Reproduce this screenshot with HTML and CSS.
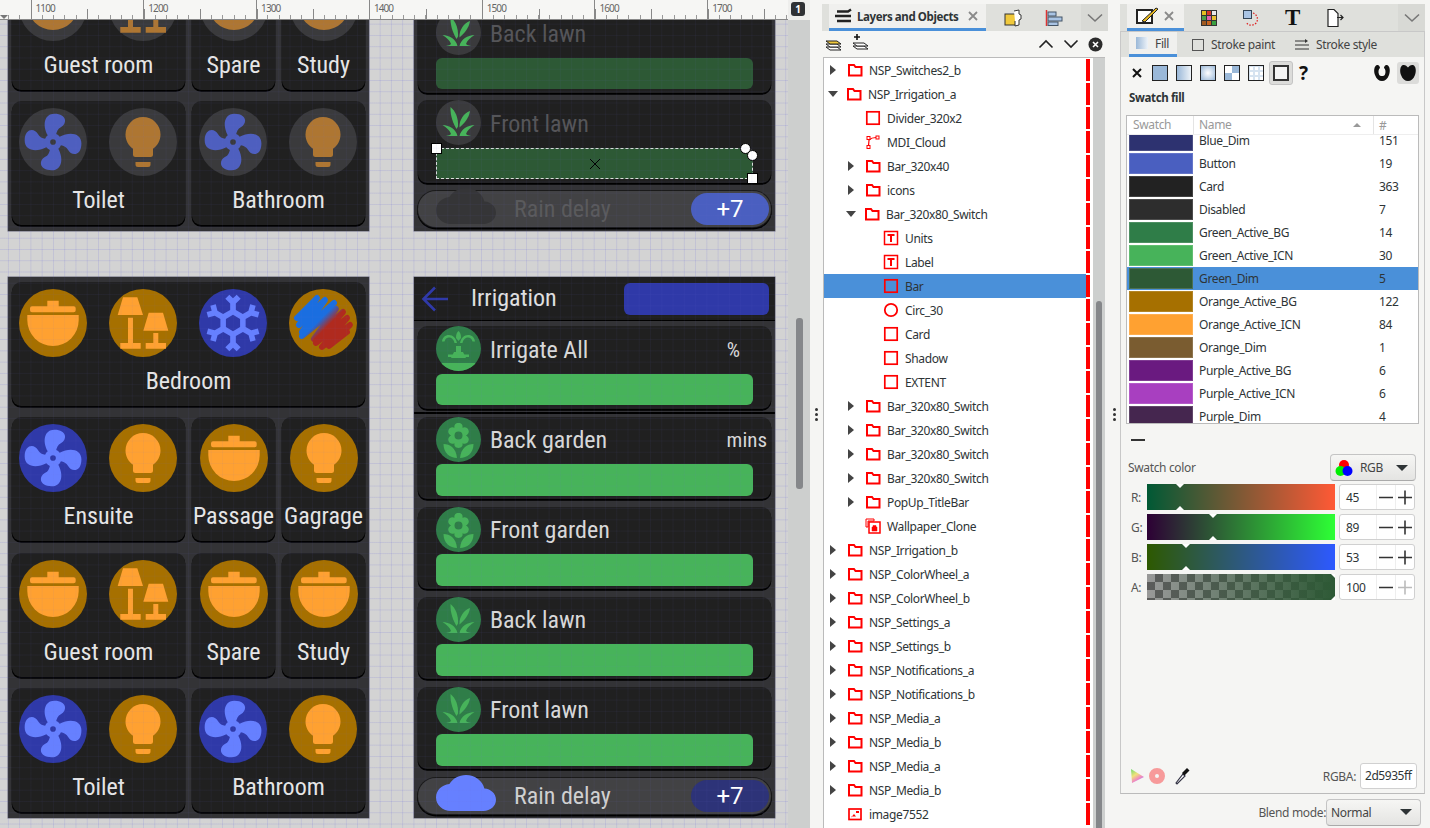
FILE: index.html
```html
<!DOCTYPE html>
<html>
<head>
<title>Inkscape - NSPanel</title>
<link rel="stylesheet" href="styles.css">
</head>
<body>

<svg class="defs" width="0" height="0">
  <defs>
    <linearGradient id="scribble-grad" gradientUnits="userSpaceOnUse" x1="18" y1="18" x2="50" y2="50">
      <stop offset="0.4" stop-color="#1a6ee0"/>
      <stop offset="0.62" stop-color="#b02a1e"/>
    </linearGradient>
    <symbol id="i-fan" viewBox="0 0 24 24"><path d="M12,11A1,1 0 0,0 11,12A1,1 0 0,0 12,13A1,1 0 0,0 13,12A1,1 0 0,0 12,11M12.5,2C17,2 17.11,5.57 14.75,6.75C13.76,7.24 13.32,8.29 13.13,9.22C13.61,9.42 14.03,9.73 14.35,10.13C18.05,8.13 22.03,8.92 22.03,12.5C22.03,17 18.46,17.1 17.28,14.73C16.78,13.74 15.72,13.3 14.79,13.11C14.59,13.59 14.28,14 13.88,14.34C15.87,18.03 15.08,22 11.5,22C7,22 6.91,18.42 9.27,17.24C10.25,16.75 10.69,15.71 10.89,14.79C10.4,14.59 9.97,14.27 9.65,13.87C5.96,15.85 2,15.07 2,11.5C2,7 5.56,6.89 6.74,9.26C7.24,10.25 8.29,10.68 9.22,10.87C9.41,10.39 9.73,9.97 10.14,9.65C8.15,5.96 8.94,2 12.5,2Z"/></symbol>
    <symbol id="i-bulb" viewBox="-1.6 -1.6 27.2 27.2"><path d="M12,2A7,7 0 0,0 5,9C5,11.38 6.19,13.47 8,14.74V17A1,1 0 0,0 9,18H15A1,1 0 0,0 16,17V14.74C17.81,13.47 19,11.38 19,9A7,7 0 0,0 12,2M9,21A1,1 0 0,0 10,22H14A1,1 0 0,0 15,21V20H9V21Z"/></symbol>
    <symbol id="i-snow" viewBox="0 0 24 24"><path d="M20.79,13.95L18.46,14.57L16.46,13.44V10.56L18.46,9.43L20.79,10.05L21.31,8.12L19.54,7.65L20,5.88L18.07,5.36L17.45,7.69L15.45,8.82L13,7.38V5.12L14.71,3.41L13.29,2L12,3.29L10.71,2L9.29,3.41L11,5.12V7.38L8.5,8.82L6.5,7.69L5.92,5.36L4,5.88L4.47,7.65L2.7,8.12L3.22,10.05L5.55,9.43L7.55,10.56V13.45L5.55,14.58L3.22,13.96L2.7,15.89L4.47,16.36L4,18.12L5.93,18.64L6.55,16.31L8.55,15.18L11,16.62V18.88L9.29,20.59L10.71,22L12,20.71L13.29,22L14.7,20.59L13,18.88V16.62L15.5,15.17L17.5,16.3L18.12,18.63L20,18.12L19.53,16.35L21.3,15.88L20.79,13.95M9.5,10.56L12,9.11L14.5,10.56V13.44L12,14.89L9.5,13.44V10.56Z"/></symbol>
    <symbol id="i-ceiling" viewBox="0 0 68 68"><path d="M28.3 11.7H39.7V17.3H54.7Q56.7 17.3 56.7 19.3V21.3Q56.7 23.3 54.7 23.3H13Q11 23.3 11 21.3V19.3Q11 17.3 13 17.3H28.3Z"/><path d="M8.3 26H59.7V31A25.7 26 0 0 1 8.3 31Z"/></symbol>
    <symbol id="i-lamps" viewBox="0 0 68 68"><path d="M14 8.3H28.3L34 26H8.7Z"/><path d="M19 28.7H24V54H31.7V59.7H11.3V54H19Z"/><path d="M39.7 23.7H54L59.3 41.7H34.3Z"/><path d="M44.3 44H49.3V54H57V59.7H36.7V54H44.3Z"/></symbol>
    <symbol id="i-scribble" viewBox="0 0 68 68"><path fill="none" stroke="url(#scribble-grad)" stroke-width="6" stroke-linejoin="round" stroke-linecap="round" d="M8 29L28 9L10 36L36 11L13 43L45 14L13 47L47 20L25 50L54 23L27 54L58 29L33 58L61 36L40 57L58 43"/></symbol>
    <symbol id="i-fountain" viewBox="0 0 45 45"><path d="M15 32H30L27 26H25V20H20V26H18Z"/><path d="M12 28.5H33V31H12Z"/><path d="M0 37H45V45H0Z"/><path d="M21 17C20 12 17 9 13 9C9 9 6.500 11.500 6 15.500H8.500C9 13 11 11.500 13 11.500C16 11.500 18 14 18.500 17Z"/><path d="M24 17C25 12 28 9 32 9C36 9 38.500 11.500 39 15.500H36.500C36 13 34 11.500 32 11.500C29 11.500 27 14 26.500 17Z"/><path d="M20 12C20 8 21 6 22.500 5C24 6 25 8 25 12L22.500 15Z"/></symbol>
    <symbol id="i-flower" viewBox="0 0 45 45"><path fill-rule="evenodd" d="M22.500 6C25.500 6 27 8 26.500 10.700C29 9.500 31.500 10.500 32.500 13C33.500 15.500 32 17.500 30 18.500C32 19.500 33.500 21.500 32.500 24C31.500 26.500 29 27.500 26.500 26.300C27 29 25.500 31 22.500 31C19.500 31 18 29 18.500 26.300C16 27.500 13.500 26.500 12.500 24C11.500 21.500 13 19.500 15 18.500C13 17.500 11.500 15.500 12.500 13C13.500 10.500 16 9.500 18.500 10.700C18 8 19.500 6 22.500 6ZM22.500 14.500A4 4 0 1 0 22.500 22.500A4 4 0 1 0 22.500 14.500Z"/><path d="M7.500 27C14 27 20 31 21 41C14 41 7.500 36 7.500 27Z"/><path d="M37.500 27C31 27 25 31 24 41C31 41 37.500 36 37.500 27Z"/></symbol>
    <symbol id="i-grass" viewBox="0 0 45 45"><path d="M6.500 25C13.500 25.500 20 29 21.500 36H7.500C11 36 13.500 35.500 15 34C14 30.500 10.500 27.500 6.500 25Z"/><path d="M38.500 25C31.500 25.500 25 29 23.500 36H37.500C34 36 31.500 35.500 30 34C31 30.500 34.500 27.500 38.500 25Z"/><path d="M14.500 7C19.500 11 22.500 18 22 26.500L20.500 29C17.500 24 14 16 14.500 7Z"/><path d="M34 11C33 18 28.500 23 23.500 27.500C23 20 27.500 13.500 34 11Z"/></symbol>
    <symbol id="i-folder" viewBox="0 0 16 16"><path fill="none" stroke="#f00" stroke-width="2" d="M2 3H7L8.500 5H14.500V13.500H2Z"/></symbol>
    <symbol id="i-rect" viewBox="0 0 16 16"><rect x="1.800" y="1.800" width="12.400" height="12.400" fill="none" stroke="#f00" stroke-width="1.700"/></symbol>
    <symbol id="i-path" viewBox="0 0 16 16"><path fill="none" stroke="#f00" stroke-width="1.200" d="M3.500 12L4 6C6 4 8 3.500 11 3.500"/><rect x="2" y="2.500" width="3" height="3" fill="#fff" stroke="#f00"/><rect x="2" y="11.500" width="3" height="3" fill="#fff" stroke="#f00"/><rect x="11" y="2" width="3" height="3" fill="#fff" stroke="#f00"/></symbol>
    <symbol id="i-text" viewBox="0 0 16 16"><rect x="1.500" y="1.500" width="13" height="13" fill="none" stroke="#f00" stroke-width="1.500"/><path d="M4.500 4H11.500V6H9V12H7V6H4.500Z" fill="#f00"/></symbol>
    <symbol id="i-circ" viewBox="0 0 16 16"><circle cx="8" cy="8" r="6.200" fill="none" stroke="#f00" stroke-width="1.800"/></symbol>
    <symbol id="i-clone" viewBox="0 0 16 16"><path fill="none" stroke="#f00" d="M1 1H9V3H3V9H1Z"/><rect x="4" y="4" width="11" height="11" fill="none" stroke="#f00" stroke-width="1.500"/><path d="M7 9H12V13H7ZM8 9V7.500H11V9" fill="#f00" stroke="#f00" stroke-width=".5"/></symbol>
    <symbol id="i-image" viewBox="0 0 16 16"><rect x="2" y="3" width="12" height="10.500" fill="none" stroke="#f00" stroke-width="1.700"/><path d="M4 11.500L7 8L9 10.500H4ZM9 7H12V5H9Z" fill="#f00"/></symbol>
    <symbol id="i-minus-plus" viewBox="0 0 56 26"><path d="M17.500 0V26M36.500 0V26" stroke="#eee" fill="none"/><path d="M20 13.500H34M39 13.500H53M46 6.500V20.500" fill="none" stroke="#333" stroke-width="1.600"/></symbol>
    <symbol id="i-close" viewBox="0 0 10 10"><path d="M1 1L9 9M9 1L1 9" fill="none" stroke="#8a8a8a" stroke-width="1.800"/></symbol>
  </defs>
</svg>

<div class="app">

  <!-- canvas side -->
  <div class="canvas-side">
    <div class="ruler-row">
      <div class="ruler">
        <span class="rule-num">1100</span>
        <span class="rule-num">1200</span>
        <span class="rule-num">1300</span>
        <span class="rule-num">1400</span>
        <span class="rule-num">1500</span>
        <span class="rule-num">1600</span>
        <span class="rule-num">1700</span>
      </div>
      <div class="page-badge"><b>1</b></div>
    </div>
    <div class="canvas-row">
      <div class="paper">

        <div class="panel panel-rooms dim panel-a">
          <div class="card col-2"><div class="icons"><span class="circ"><svg class="ico"><use href="#i-ceiling"/></svg></span><span class="circ"><svg class="ico"><use href="#i-lamps"/></svg></span></div><div class="room-label">Guest room</div></div>
          <div class="card"><div class="icons"><span class="circ"><svg class="ico"><use href="#i-ceiling"/></svg></span></div><div class="room-label">Spare</div></div>
          <div class="card"><div class="icons"><span class="circ"><svg class="ico"><use href="#i-ceiling"/></svg></span></div><div class="room-label">Study</div></div>
          <div class="card col-2"><div class="icons"><span class="circ blue"><svg class="ico"><use href="#i-fan"/></svg></span><span class="circ"><svg class="ico"><use href="#i-bulb"/></svg></span></div><div class="room-label">Toilet</div></div>
          <div class="card col-2"><div class="icons"><span class="circ blue"><svg class="ico"><use href="#i-fan"/></svg></span><span class="circ"><svg class="ico"><use href="#i-bulb"/></svg></span></div><div class="room-label">Bathroom</div></div>
        </div>

        <div class="panel panel-irr dim panel-b">
          <div class="irr-card">
            <div class="irr-head"><span class="irr-circ"><svg class="ico"><use href="#i-grass"/></svg></span><span class="irr-label">Back lawn</span></div>
            <div class="irr-bar"></div>
          </div>
          <div class="irr-card">
            <div class="irr-head"><span class="irr-circ"><svg class="ico"><use href="#i-grass"/></svg></span><span class="irr-label">Front lawn</span></div>
            <div class="irr-bar selected">
              <span class="handle sq tl"></span>
              <span class="handle rd tr1"></span>
              <span class="handle rd tr2"></span>
              <span class="handle sq br"></span>
              <svg class="center-x" width="12" height="12"><path d="M1 1L11 11M11 1L1 11" stroke="#000" fill="none"/></svg>
            </div>
          </div>
          <div class="rain">
            <svg class="cloud" viewBox="0 4 24 16" preserveAspectRatio="none"><path d="M19.35 10.04C18.67 6.59 15.64 4 12 4 9.11 4 6.6 5.64 5.35 8.04 2.34 8.36 0 10.91 0 14c0 3.31 2.69 6 6 6h13c2.76 0 5-2.24 5-5 0-2.64-2.05-4.78-4.65-4.96z"/></svg>
            <span class="rain-label">Rain delay</span>
            <span class="rain-btn">+7</span>
          </div>
        </div>

        <div class="panel panel-rooms panel-c">
          <div class="card col-3"><div class="icons"><span class="circ"><svg class="ico"><use href="#i-ceiling"/></svg></span><span class="circ"><svg class="ico"><use href="#i-lamps"/></svg></span><span class="circ blue"><svg class="ico"><use href="#i-snow"/></svg></span><span class="circ"><svg class="ico scribble"><use href="#i-scribble"/></svg></span></div><div class="room-label">Bedroom</div></div>
          <div class="card col-2"><div class="icons"><span class="circ blue"><svg class="ico"><use href="#i-fan"/></svg></span><span class="circ"><svg class="ico"><use href="#i-bulb"/></svg></span></div><div class="room-label">Ensuite</div></div>
          <div class="card"><div class="icons"><span class="circ"><svg class="ico"><use href="#i-ceiling"/></svg></span></div><div class="room-label">Passage</div></div>
          <div class="card"><div class="icons"><span class="circ"><svg class="ico"><use href="#i-bulb"/></svg></span></div><div class="room-label">Gagrage</div></div>
          <div class="card col-2"><div class="icons"><span class="circ"><svg class="ico"><use href="#i-ceiling"/></svg></span><span class="circ"><svg class="ico"><use href="#i-lamps"/></svg></span></div><div class="room-label">Guest room</div></div>
          <div class="card"><div class="icons"><span class="circ"><svg class="ico"><use href="#i-ceiling"/></svg></span></div><div class="room-label">Spare</div></div>
          <div class="card"><div class="icons"><span class="circ"><svg class="ico"><use href="#i-ceiling"/></svg></span></div><div class="room-label">Study</div></div>
          <div class="card col-2"><div class="icons"><span class="circ blue"><svg class="ico"><use href="#i-fan"/></svg></span><span class="circ"><svg class="ico"><use href="#i-bulb"/></svg></span></div><div class="room-label">Toilet</div></div>
          <div class="card col-2"><div class="icons"><span class="circ blue"><svg class="ico"><use href="#i-fan"/></svg></span><span class="circ"><svg class="ico"><use href="#i-bulb"/></svg></span></div><div class="room-label">Bathroom</div></div>
        </div>

        <div class="panel panel-irr panel-d">
          <div class="title-bar">
            <svg class="back" width="28" height="26" viewBox="0 0 28 26"><path d="M27 13H3M14 1.500L2.500 13L14 24.500" fill="none" stroke="#2f39a8" stroke-width="2.600"/></svg>
            <span class="title-text">Irrigation</span>
            <span class="title-btn"></span>
          </div>
          <div class="irr-card first">
            <div class="irr-head"><span class="irr-circ"><svg class="ico"><use href="#i-fountain"/></svg></span><span class="irr-label">Irrigate All</span><span class="irr-unit pct">%</span></div>
            <div class="irr-bar"></div>
          </div>
          <div class="divider"></div>
          <div class="irr-card">
            <div class="irr-head"><span class="irr-circ"><svg class="ico"><use href="#i-flower"/></svg></span><span class="irr-label">Back garden</span><span class="irr-unit">mins</span></div>
            <div class="irr-bar"></div>
          </div>
          <div class="irr-card">
            <div class="irr-head"><span class="irr-circ"><svg class="ico"><use href="#i-flower"/></svg></span><span class="irr-label">Front garden</span></div>
            <div class="irr-bar"></div>
          </div>
          <div class="irr-card">
            <div class="irr-head"><span class="irr-circ"><svg class="ico"><use href="#i-grass"/></svg></span><span class="irr-label">Back lawn</span></div>
            <div class="irr-bar"></div>
          </div>
          <div class="irr-card">
            <div class="irr-head"><span class="irr-circ"><svg class="ico"><use href="#i-grass"/></svg></span><span class="irr-label">Front lawn</span></div>
            <div class="irr-bar"></div>
          </div>
          <div class="rain">
            <svg class="cloud" viewBox="0 4 24 16" preserveAspectRatio="none"><path d="M19.35 10.04C18.67 6.59 15.64 4 12 4 9.11 4 6.6 5.64 5.35 8.04 2.34 8.36 0 10.91 0 14c0 3.31 2.69 6 6 6h13c2.76 0 5-2.24 5-5 0-2.64-2.05-4.78-4.65-4.96z"/></svg>
            <span class="rain-label">Rain delay</span>
            <span class="rain-btn">+7</span>
          </div>
        </div>

      </div>
      <div class="canvas-scroll"><div class="canvas-thumb"></div></div>
    </div>
  </div>

  <div class="grip"><i></i><i></i><i></i></div>

  <!-- layers dock -->
  <div class="dock dock-layers">
    <div class="tabbar">
      <div class="tab active tab-layers">
        <svg class="tab-glyph" width="20" height="16" viewBox="0 0 20 16"><path d="M3 3.500H14L17 1.500M1 8H17M3 13H17" fill="none" stroke="#222" stroke-width="2.400"/></svg>
        <b>Layers and Objects</b><svg class="tab-x" width="10" height="10"><use href="#i-close"/></svg>
      </div>
      <div class="tab-icon tab-xml"><svg width="18" height="18" viewBox="0 0 18 18"><rect x="1" y="5" width="11" height="11" fill="#f0c93c" stroke="#333"/><path d="M10 2L15 1V5L17 6V10L15 11V16L11 17V12" fill="#fff" stroke="#333"/></svg></div>
      <div class="tab-icon tab-align"><svg width="18" height="18" viewBox="0 0 18 18"><path d="M1.500 1V17" stroke="#d33" stroke-width="1.500"/><rect x="3" y="3" width="8" height="4" fill="#a9c4e4" stroke="#456"/><rect x="3" y="8" width="14" height="4" fill="#a9c4e4" stroke="#456"/><rect x="3" y="13" width="10" height="3.500" fill="#a9c4e4" stroke="#456"/></svg></div>
      <div class="tab-more"><svg width="16" height="10" viewBox="0 0 16 10"><path d="M1 1.500L8 8L15 1.500" fill="none" stroke="#777" stroke-width="1.600"/></svg></div>
    </div>
    <div class="layer-tools">
      <svg width="18" height="16" viewBox="0 0 18 16"><path d="M1 11L5 14H16L12 11Z" fill="#fff" stroke="#222"/><path d="M1 8L5 11H16L12 8Z" fill="#fff" stroke="#222"/><path d="M1 5L5 8H16L12 5Z" fill="#f0c93c" stroke="#222"/></svg>
      <svg class="add-layer" width="18" height="20" viewBox="0 0 18 20"><path d="M2 5H8M5 2V8" stroke="#111" stroke-width="1.600"/><path d="M1 14L5 17H16L12 14Z" fill="#fff" stroke="#222"/><path d="M1 11L5 14H16L12 11Z" fill="#fff" stroke="#222"/></svg>
      <span class="spacer"></span>
      <svg width="16" height="10" viewBox="0 0 16 10"><path d="M1.500 8.500L8 2L14.500 8.500" fill="none" stroke="#222" stroke-width="1.600"/></svg>
      <svg width="16" height="10" viewBox="0 0 16 10"><path d="M1.500 1.500L8 8L14.500 1.500" fill="none" stroke="#222" stroke-width="1.600"/></svg>
      <svg width="15" height="15" viewBox="0 0 15 15"><circle cx="7.500" cy="7.500" r="7" fill="#2c2c2c"/><path d="M5 5L10 10M10 5L5 10" stroke="#fff" stroke-width="1.600"/></svg>
    </div>
    <div class="layer-wrap">
      <div class="layer-list">
        <div class="row"><div class="row-main lv0"><span class="arrow"></span><svg class="li"><use href="#i-folder"/></svg><span>NSP_Switches2_b</span></div><i class="tag"></i></div>
        <div class="row"><div class="row-main lv0"><span class="arrow open"></span><svg class="li"><use href="#i-folder"/></svg><span>NSP_Irrigation_a</span></div><i class="tag"></i></div>
        <div class="row"><div class="row-main lv1"><span class="arrow none"></span><svg class="li"><use href="#i-rect"/></svg><span>Divider_320x2</span></div><i class="tag"></i></div>
        <div class="row"><div class="row-main lv1"><span class="arrow none"></span><svg class="li"><use href="#i-path"/></svg><span>MDI_Cloud</span></div><i class="tag"></i></div>
        <div class="row"><div class="row-main lv1"><span class="arrow"></span><svg class="li"><use href="#i-folder"/></svg><span>Bar_320x40</span></div><i class="tag"></i></div>
        <div class="row"><div class="row-main lv1"><span class="arrow"></span><svg class="li"><use href="#i-folder"/></svg><span>icons</span></div><i class="tag"></i></div>
        <div class="row"><div class="row-main lv1"><span class="arrow open"></span><svg class="li"><use href="#i-folder"/></svg><span>Bar_320x80_Switch</span></div><i class="tag"></i></div>
        <div class="row"><div class="row-main lv2"><span class="arrow none"></span><svg class="li"><use href="#i-text"/></svg><span>Units</span></div><i class="tag"></i></div>
        <div class="row"><div class="row-main lv2"><span class="arrow none"></span><svg class="li"><use href="#i-text"/></svg><span>Label</span></div><i class="tag"></i></div>
        <div class="row"><div class="row-main lv2 picked"><span class="arrow none"></span><svg class="li"><use href="#i-rect"/></svg><span>Bar</span></div><i class="tag"></i></div>
        <div class="row"><div class="row-main lv2"><span class="arrow none"></span><svg class="li"><use href="#i-circ"/></svg><span>Circ_30</span></div><i class="tag"></i></div>
        <div class="row"><div class="row-main lv2"><span class="arrow none"></span><svg class="li"><use href="#i-rect"/></svg><span>Card</span></div><i class="tag"></i></div>
        <div class="row"><div class="row-main lv2"><span class="arrow none"></span><svg class="li"><use href="#i-rect"/></svg><span>Shadow</span></div><i class="tag"></i></div>
        <div class="row"><div class="row-main lv2"><span class="arrow none"></span><svg class="li"><use href="#i-rect"/></svg><span>EXTENT</span></div><i class="tag"></i></div>
        <div class="row"><div class="row-main lv1"><span class="arrow"></span><svg class="li"><use href="#i-folder"/></svg><span>Bar_320x80_Switch</span></div><i class="tag"></i></div>
        <div class="row"><div class="row-main lv1"><span class="arrow"></span><svg class="li"><use href="#i-folder"/></svg><span>Bar_320x80_Switch</span></div><i class="tag"></i></div>
        <div class="row"><div class="row-main lv1"><span class="arrow"></span><svg class="li"><use href="#i-folder"/></svg><span>Bar_320x80_Switch</span></div><i class="tag"></i></div>
        <div class="row"><div class="row-main lv1"><span class="arrow"></span><svg class="li"><use href="#i-folder"/></svg><span>Bar_320x80_Switch</span></div><i class="tag"></i></div>
        <div class="row"><div class="row-main lv1"><span class="arrow"></span><svg class="li"><use href="#i-folder"/></svg><span>PopUp_TitleBar</span></div><i class="tag"></i></div>
        <div class="row"><div class="row-main lv1"><span class="arrow none"></span><svg class="li"><use href="#i-clone"/></svg><span>Wallpaper_Clone</span></div><i class="tag"></i></div>
        <div class="row"><div class="row-main lv0"><span class="arrow"></span><svg class="li"><use href="#i-folder"/></svg><span>NSP_Irrigation_b</span></div><i class="tag"></i></div>
        <div class="row"><div class="row-main lv0"><span class="arrow"></span><svg class="li"><use href="#i-folder"/></svg><span>NSP_ColorWheel_a</span></div><i class="tag"></i></div>
        <div class="row"><div class="row-main lv0"><span class="arrow"></span><svg class="li"><use href="#i-folder"/></svg><span>NSP_ColorWheel_b</span></div><i class="tag"></i></div>
        <div class="row"><div class="row-main lv0"><span class="arrow"></span><svg class="li"><use href="#i-folder"/></svg><span>NSP_Settings_a</span></div><i class="tag"></i></div>
        <div class="row"><div class="row-main lv0"><span class="arrow"></span><svg class="li"><use href="#i-folder"/></svg><span>NSP_Settings_b</span></div><i class="tag"></i></div>
        <div class="row"><div class="row-main lv0"><span class="arrow"></span><svg class="li"><use href="#i-folder"/></svg><span>NSP_Notifications_a</span></div><i class="tag"></i></div>
        <div class="row"><div class="row-main lv0"><span class="arrow"></span><svg class="li"><use href="#i-folder"/></svg><span>NSP_Notifications_b</span></div><i class="tag"></i></div>
        <div class="row"><div class="row-main lv0"><span class="arrow"></span><svg class="li"><use href="#i-folder"/></svg><span>NSP_Media_a</span></div><i class="tag"></i></div>
        <div class="row"><div class="row-main lv0"><span class="arrow"></span><svg class="li"><use href="#i-folder"/></svg><span>NSP_Media_b</span></div><i class="tag"></i></div>
        <div class="row"><div class="row-main lv0"><span class="arrow"></span><svg class="li"><use href="#i-folder"/></svg><span>NSP_Media_a</span></div><i class="tag"></i></div>
        <div class="row"><div class="row-main lv0"><span class="arrow"></span><svg class="li"><use href="#i-folder"/></svg><span>NSP_Media_b</span></div><i class="tag"></i></div>
        <div class="row"><div class="row-main lv0"><span class="arrow none"></span><svg class="li"><use href="#i-image"/></svg><span>image7552</span></div><i class="tag"></i></div>
      </div>
      <div class="layer-scroll"><div class="layer-thumb"></div></div>
    </div>
  </div>

  <div class="grip"><i></i><i></i><i></i></div>

  <!-- fill and stroke dock -->
  <div class="dock dock-fill">
    <div class="tabbar">
      <div class="tab active tab-fill">
        <svg class="tab-glyph" width="24" height="20" viewBox="0 0 24 20"><path d="M2 4H17V17H2Z" fill="#fff" stroke="#222" stroke-width="2"/><path d="M7 15L21 2L23 3L10 16Z" fill="#e8b923" stroke="#222"/></svg>
        <svg class="tab-x" width="10" height="10"><use href="#i-close"/></svg>
      </div>
      <div class="tab-icon ti-1"><svg width="18" height="18" viewBox="0 0 18 18"><rect x="1" y="1" width="16" height="16" fill="#333"/><rect x="2" y="2" width="4" height="4" fill="#e4c11f"/><rect x="7" y="2" width="4" height="4" fill="#d83a2a"/><rect x="12" y="2" width="4" height="4" fill="#e8e8e8"/><rect x="2" y="7" width="4" height="4" fill="#4aa04a"/><rect x="7" y="7" width="4" height="4" fill="#e060b0"/><rect x="12" y="7" width="4" height="4" fill="#e8c030"/><rect x="2" y="12" width="4" height="4" fill="#a05a20"/><rect x="7" y="12" width="4" height="4" fill="#c86420"/><rect x="12" y="12" width="4" height="4" fill="#3aa040"/></svg></div>
      <div class="tab-icon ti-2"><svg width="18" height="18" viewBox="0 0 18 18"><rect x="1.500" y="1.500" width="8" height="8" fill="#a9c4e4" stroke="#345"/><path d="M11 4C16 6 17 12 13 15C10 17 6 16.500 4 13" fill="none" stroke="#d22" stroke-dasharray="1.500 1.500" stroke-width="1.300"/></svg></div>
      <div class="tab-icon ti-3 big-t">T</div>
      <div class="tab-icon ti-4"><svg width="18" height="20" viewBox="0 0 18 20"><path d="M2 1.500H8L12 5.500V18.500H2Z" fill="#fff" stroke="#222" stroke-width="1.200"/><path d="M11 9.500H17M14.500 7L17 9.500L14.500 12" fill="none" stroke="#222" stroke-width="1.200"/></svg></div>
      <div class="tab-more"><svg width="16" height="10" viewBox="0 0 16 10"><path d="M1 1.500L8 8L15 1.500" fill="none" stroke="#777" stroke-width="1.600"/></svg></div>
    </div>

    <div class="fill-box">
      <div class="subtabs">
        <div class="subtab active"><span class="sub-swatch"></span>Fill</div>
        <div class="subtab"><span class="sub-empty"></span>Stroke paint</div>
        <div class="subtab"><svg width="14" height="12" viewBox="0 0 14 12"><path d="M0 2H11M0 6H14M0 10H14" stroke="#333" fill="none"/><path d="M10 0L13 2L10 4Z" fill="#333"/></svg>Stroke style</div>
      </div>

      <div class="paint-row">
        <svg class="paint-x" width="14" height="12" viewBox="0 0 14 12"><path d="M3 2L11 10M11 2L3 10" stroke="#111" stroke-width="2" fill="none"/></svg>
        <span class="paint p-flat"></span>
        <span class="paint p-linear"></span>
        <span class="paint p-radial"></span>
        <span class="paint p-check"></span>
        <span class="paint p-dots"></span>
        <span class="paint-on"><span class="paint p-swatch"></span></span>
        <span class="paint-q">?</span>
        <span class="spacer"></span>
        <svg class="rule-ico" width="18" height="18" viewBox="0 0 18 18"><path fill-rule="evenodd" d="M4 1C1 2 0.500 7 2 11C3.500 15 6 17 9 17C12 17 14.500 15 16 11C17.500 7 17 2 14 1C12.500 .5 11 2 11 4C12.500 5 13 8 12 10.500C11 12.500 7 12.500 6 10.500C5 8 5.500 5 7 4C7 2 5.500 .5 4 1Z"/></svg>
        <span class="rule-on"><svg width="18" height="18" viewBox="0 0 18 18"><path d="M4 1C1 2 .5 7 2 11C3.500 15 6 17 9 17C12 17 14.500 15 16 11C17.500 7 17 2 14 1C12 .5 10 2 9 3.500C8 2 6 .5 4 1Z"/></svg></span>
      </div>

      <div class="swatch-title">Swatch fill</div>

      <div class="swatch-table">
        <div class="sw-head">
          <span class="c-sw">Swatch</span>
          <span class="c-name">Name<em class="sort"></em></span>
          <span class="c-num">#</span>
        </div>
        <div class="sw-body">
          <div class="sw-row first"><span class="c-sw"><i class="chip c-blue-dim"></i></span><span class="c-name">Blue_Dim</span><span class="c-num">151</span></div>
          <div class="sw-row"><span class="c-sw"><i class="chip c-button"></i></span><span class="c-name">Button</span><span class="c-num">19</span></div>
          <div class="sw-row"><span class="c-sw"><i class="chip c-card"></i></span><span class="c-name">Card</span><span class="c-num">363</span></div>
          <div class="sw-row"><span class="c-sw"><i class="chip c-disabled"></i></span><span class="c-name">Disabled</span><span class="c-num">7</span></div>
          <div class="sw-row"><span class="c-sw"><i class="chip c-green-bg"></i></span><span class="c-name">Green_Active_BG</span><span class="c-num">14</span></div>
          <div class="sw-row"><span class="c-sw"><i class="chip c-green-icn"></i></span><span class="c-name">Green_Active_ICN</span><span class="c-num">30</span></div>
          <div class="sw-row picked"><span class="c-sw"><i class="chip c-green-dim"></i></span><span class="c-name">Green_Dim</span><span class="c-num">5</span></div>
          <div class="sw-row"><span class="c-sw"><i class="chip c-orange-bg"></i></span><span class="c-name">Orange_Active_BG</span><span class="c-num">122</span></div>
          <div class="sw-row"><span class="c-sw"><i class="chip c-orange-icn"></i></span><span class="c-name">Orange_Active_ICN</span><span class="c-num">84</span></div>
          <div class="sw-row"><span class="c-sw"><i class="chip c-orange-dim"></i></span><span class="c-name">Orange_Dim</span><span class="c-num">1</span></div>
          <div class="sw-row"><span class="c-sw"><i class="chip c-purple-bg"></i></span><span class="c-name">Purple_Active_BG</span><span class="c-num">6</span></div>
          <div class="sw-row"><span class="c-sw"><i class="chip c-purple-icn"></i></span><span class="c-name">Purple_Active_ICN</span><span class="c-num">6</span></div>
          <div class="sw-row"><span class="c-sw"><i class="chip c-purple-dim"></i></span><span class="c-name">Purple_Dim</span><span class="c-num">4</span></div>
        </div>
      </div>

      <div class="dash-mark"></div>

      <div class="color-head">
        <span>Swatch color</span>
        <div class="combo rgb-combo">
          <svg width="18" height="18" viewBox="0 0 18 18"><circle cx="9" cy="6" r="5" fill="#f00"/><circle cx="5.500" cy="12" r="5" fill="#0e0"/><circle cx="12.500" cy="12" r="5" fill="#00f"/></svg>
          <span>RGB</span>
          <em class="caret"></em>
        </div>
      </div>

      <div class="sliders">
        <div class="sl-row"><label>R:</label><div class="slider s-r"><i class="mark top" style="left:17.6%"></i><i class="mark bot" style="left:17.6%"></i></div><div class="spin"><span>45</span><svg width="56" height="26"><use href="#i-minus-plus"/></svg></div></div>
        <div class="sl-row"><label>G:</label><div class="slider s-g"><i class="mark top" style="left:34.9%"></i><i class="mark bot" style="left:34.9%"></i></div><div class="spin"><span>89</span><svg width="56" height="26"><use href="#i-minus-plus"/></svg></div></div>
        <div class="sl-row"><label>B:</label><div class="slider s-b"><i class="mark top" style="left:20.8%"></i><i class="mark bot" style="left:20.8%"></i></div><div class="spin"><span>53</span><svg width="56" height="26"><use href="#i-minus-plus"/></svg></div></div>
        <div class="sl-row"><label>A:</label><div class="slider s-a"><i class="mark top" style="left:100%"></i><i class="mark bot" style="left:100%"></i></div><div class="spin"><span>100</span><svg width="56" height="26" viewBox="0 0 56 26"><path d="M17.500 0V26M36.500 0V26" stroke="#eee" fill="none"/><path d="M20 13.500H34" stroke="#333" stroke-width="1.600"/><path d="M39 13.500H53M46 6.500V20.500" stroke="#bbb" stroke-width="1.600"/></svg></div></div>
      </div>

      <div class="rgba-row">
        <svg width="16" height="16" viewBox="0 0 16 16"><defs><linearGradient id="tri" x1="0" y1="0" x2="0.600" y2="1"><stop offset="0" stop-color="#6fdc6f"/><stop offset=".45" stop-color="#f0e27a"/><stop offset=".75" stop-color="#f08ac0"/><stop offset="1" stop-color="#a07af0"/></linearGradient></defs><path d="M2 1L15 9L3 15Z" fill="url(#tri)"/></svg>
        <svg class="ring" width="16" height="16" viewBox="0 0 16 16"><circle cx="8" cy="8" r="5" fill="none" stroke="#f79a9a" stroke-width="6"/></svg>
        <svg class="picker" width="16" height="18" viewBox="0 0 16 18"><path d="M2 16L9 7L11 9L3 17Z" fill="#fff" stroke="#334" stroke-width="1.200"/><path d="M8 6L13 1L15.500 3.500L10.500 8.500Z" fill="#111"/></svg>
        <span class="spacer"></span>
        <span class="rgba-lbl">RGBA:</span>
        <span class="rgba-val">2d5935ff</span>
      </div>
    </div>

    <div class="blend-row">
      <span>Blend mode:</span>
      <div class="combo blend-combo"><span>Normal</span><em class="caret"></em></div>
    </div>
  </div>

</div>

</body>
</html>
```

FILE: styles.css
```css
body {
  margin: 0;
  width: 1430px;
  height: 828px;
  overflow: hidden;
  background-color: #f5f5f3;
  font-family: "Noto Sans", sans-serif;
  font-size: 12px;
  color: #2e3436;
}

.defs {
  position: absolute;
}

.app {
  display: flex;
  height: 828px;
}

.spacer {
  flex: 1;
}

/* canvas */
.canvas-side {
  width: 810px;
  flex: none;
  display: flex;
  flex-direction: column;
}

.ruler-row {
  display: flex;
  height: 20px;
}

.ruler {
  position: relative;
  width: 788px;
  box-sizing: border-box;
  display: flex;
  padding-left: 30.5px;
  overflow: hidden;
  background-color: #f6f6f4;
  background-image:
    repeating-linear-gradient(90deg, #888 0 1px, transparent 1px 56.4px),
    repeating-linear-gradient(90deg, #999 0 1px, transparent 1px 11.28px);
  background-size: 100% 10px, 100% 4px;
  background-position: 30.5px 100%, 7.9px 100%;
  background-repeat: no-repeat;
  border-bottom: 1px solid #888;
}

/* origin marker in the ruler corner */
.ruler::before {
  content: "";
  position: absolute;
  left: 0;
  bottom: 0;
  border-left: 4px solid transparent;
  border-right: 4px solid transparent;
  border-top: 4px solid #777;
}

.rule-num {
  flex: 0 0 112.8px;
  box-sizing: border-box;
  height: 20px;
  border-left: 1px solid #888;
  padding-left: 4px;
  font-size: 10px;
  letter-spacing: -0.9px;
  line-height: 17px;
  color: #666;
}

.page-badge {
  flex: 1;
  background-color: #eeeeec;
  padding: 2px 0 0 3px;
}

.page-badge b {
  display: block;
  width: 14px;
  height: 14px;
  border-radius: 3px;
  background-color: #2e3134;
  color: white;
  font-size: 10px;
  line-height: 14px;
  text-align: center;
}

.canvas-row {
  flex: 1;
  display: flex;
}

.paper {
  position: relative;
  width: 788px;
  height: 808px;
  overflow: hidden;
  background-color: #d3d3d3;
  background-image:
    linear-gradient(90deg, rgba(110, 110, 220, 0.12) 1px, transparent 1px),
    linear-gradient(rgba(110, 110, 220, 0.12) 1px, transparent 1px);
  background-size: 11.28px 11.28px;
  background-position: 7.9px 3.7px;
}

/* faint grid shows through the artwork too */
.paper::after {
  content: "";
  position: absolute;
  inset: 0;
  pointer-events: none;
  background-image:
    linear-gradient(90deg, rgba(110, 110, 220, 0.06) 1px, transparent 1px),
    linear-gradient(rgba(110, 110, 220, 0.06) 1px, transparent 1px);
  background-size: 11.28px 11.28px;
  background-position: 7.9px 3.7px;
}

.canvas-scroll {
  flex: 1;
  background-color: #cdcfce;
  padding: 298px 7px 0 8px;
}

.canvas-thumb {
  height: 171px;
  border-radius: 3px;
  background-color: #85878a;
}

.panel {
  position: absolute;
  width: 361px;
  box-sizing: border-box;
  background-color: #333336;
  overflow: hidden;
  box-shadow: 0 0 0 0.5px #66667a;
}

.panel-a { left: 8px; top: 0; height: 211px; }
.panel-b { left: 414px; top: 0; height: 211px; }
.panel-c { left: 8px; top: 257px; height: 541px; }
.panel-d { left: 414px; top: 257px; height: 541px; }

.panel-rooms {
  display: grid;
  grid-template-columns: 173px 83px 83px;
  grid-auto-rows: 124px;
  column-gap: 7px;
  row-gap: 11.4px;
  padding: 4px 4px 6px;
  align-content: end;
}

.card {
  background-color: #202020;
  border-radius: 9px;
  box-shadow: 0 1.5px 0 0.3px #000;
}

.col-2 { grid-column: span 1; }
.col-3 { grid-column: span 3; }

.panel-a .card:nth-child(5),
.panel-c .card:nth-child(9) {
  grid-column: 2 / span 2;
}

.icons {
  display: flex;
  justify-content: space-between;
  padding: 7px 8px 0 7px;
}

.card:not(.col-2):not(.col-3) .icons {
  justify-content: center;
  padding: 7px 0 0;
}

.circ {
  flex: none;
  width: 68px;
  height: 68px;
  border-radius: 50%;
  background-color: #a67000;
  fill: #ffa131;
}

.circ.blue {
  background-color: #2f39a8;
  fill: #6680ff;
}

.ico {
  display: block;
  width: 100%;
  height: 100%;
}

.room-label {
  height: 49px;
  line-height: 49px;
  text-align: center;
  white-space: nowrap;
  font-family: Roboto, sans-serif;
  font-stretch: condensed;
  font-size: 24px;
  color: #e6e6e6;
}

.dim .circ {
  background-color: #3a3a3c;
  fill: #ae7632;
}

.dim .circ.blue {
  fill: #4e5fbf;
}

/* irrigation screens */
.panel-irr {
  display: flex;
  flex-direction: column;
  justify-content: flex-end;
  padding: 0 4px 4px;
}

.panel-d {
  justify-content: flex-start;
}

.title-bar {
  flex: none;
  display: flex;
  align-items: center;
  height: 43px;
  margin: 0 -4px 5px;
  background-color: #1f1f1f;
  border-bottom: 1px solid #000;
}

.back {
  margin-left: 7px;
}

.title-text {
  margin: 0 0 2px 22px;
  font-family: Roboto, sans-serif;
  font-stretch: condensed;
  font-size: 24px;
  color: #e0e0e0;
}

.title-btn {
  margin-left: auto;
  margin-right: 6px;
  width: 145px;
  height: 32px;
  border-radius: 6px;
  background-color: #2f39a8;
}

.irr-card {
  flex: none;
  height: 82.5px;
  margin-bottom: 7.5px;
  background-color: #202020;
  border-radius: 9px;
  box-shadow: 0 1.5px 0 0.3px #000;
}

.irr-card.first {
  margin-bottom: 3px;
}

.divider {
  flex: none;
  height: 2px;
  margin: 0 -4px 3px;
  background-color: #000;
}

.irr-head {
  display: flex;
  align-items: center;
  height: 47.5px;
  padding-left: 18px;
}

.irr-circ {
  flex: none;
  align-self: flex-start;
  width: 45px;
  height: 45px;
  border-radius: 50%;
  overflow: hidden;
  background-color: #2f7d48;
  fill: #47b35a;
}

.dim .irr-circ {
  background-color: #3a3a3c;
}

.irr-label {
  margin-left: 9px;
  font-family: Roboto, sans-serif;
  font-stretch: condensed;
  font-size: 24px;
  color: #d8d8d8;
}

.dim .irr-label {
  color: #555558;
}

.irr-unit {
  margin-left: auto;
  margin-right: 4px;
  font-family: Roboto, sans-serif;
  font-stretch: condensed;
  font-size: 21px;
  color: #d8d8d8;
}

.irr-unit.pct {
  margin-right: 31px;
}

.irr-bar {
  position: relative;
  height: 31.5px;
  margin: 0 18px;
  border-radius: 6px;
  background-color: #47b35a;
}

.dim .irr-bar {
  background-color: #2d5935;
}

.irr-bar.selected {
  border-radius: 0 6px 0 0;
  box-sizing: border-box;
  border: 1px dashed #ddd;
}

.handle {
  position: absolute;
  width: 9px;
  height: 9px;
  background-color: white;
  border: 1px solid #000;
}

.handle.rd { border-radius: 50%; }
.handle.tl { left: -6px; top: -6px; }
.handle.tr1 { right: 1px; top: -6px; }
.handle.tr2 { right: -6px; top: 1px; }
.handle.br { right: -6px; bottom: -6px; }

.center-x {
  position: absolute;
  left: 152px;
  top: 9px;
}

.rain {
  flex: none;
  display: flex;
  align-items: center;
  height: 36px;
  margin-top: 1px;
  border-radius: 18px;
  background-color: #424244;
  box-shadow: 0 0 0 1px #1a1a1a, 0 1.5px 0 1px #000;
}

.cloud {
  flex: none;
  align-self: flex-end;
  width: 60px;
  height: 36px;
  margin: 0 0 3px 18px;
  fill: #6680ff;
}

.dim .cloud {
  fill: #353537;
}

.rain-label {
  margin-left: 18px;
  font-family: Roboto, sans-serif;
  font-stretch: condensed;
  font-size: 24px;
  color: #d0d0d0;
}

.dim .rain-label {
  color: #5a5a5c;
}

.rain-btn {
  margin-left: auto;
  margin-right: 2px;
  width: 78px;
  height: 32px;
  border-radius: 16px;
  background-color: #2d3378;
  color: white;
  text-align: center;
  line-height: 32px;
  font-family: Roboto, sans-serif;
  font-size: 24px;
}

.dim .rain-btn {
  background-color: #4a5fc0;
}

/* grips between docks */
.grip {
  flex: none;
  width: 12px;
  display: flex;
  flex-direction: column;
  justify-content: center;
  align-items: center;
  gap: 2px;
}

.grip i {
  width: 3px;
  height: 3px;
  border-radius: 50%;
  background-color: #333;
}

/* docks */
.dock {
  flex: none;
  display: flex;
  flex-direction: column;
  padding-top: 4px;
  letter-spacing: -0.35px;
}

.dock-layers {
  width: 286px;
}

.dock-fill {
  width: 305px;
}

.tabbar {
  flex: none;
  display: flex;
  align-items: center;
  height: 27px;
  background-color: #dfe0dc;
}

.tab {
  display: flex;
  align-items: center;
  height: 27px;
  box-sizing: border-box;
  background-color: #f0f0ee;
  border-bottom: 3px solid #4a90d9;
}

.tab-glyph {
  flex: none;
}

.tab-layers {
  width: 157px;
  margin-left: 7px;
  padding-left: 5px;
  gap: 3px;
}

.tab-layers b {
  flex: none;
  font-size: 11.5px;
  letter-spacing: -0.4px;
}

.tab-x {
  flex: none;
  margin-left: 7px;
}

.tab-icon {
  display: flex;
  align-items: center;
}

.tab-xml { margin-left: 18px; }
.tab-align { margin-left: 23px; }

.tab-more {
  margin-left: auto;
  width: 27px;
  height: 27px;
  display: flex;
  align-items: center;
  justify-content: center;
  background-color: #d8d9d5;
}

.layer-tools {
  flex: none;
  display: flex;
  align-items: center;
  height: 26px;
  gap: 9px;
  padding: 0 5px 0 3px;
  background-color: #f5f5f3;
}

.add-layer {
  margin-top: -5px;
}

.layer-wrap {
  flex: 1;
  display: flex;
  min-height: 0;
  margin-left: 1px;
  width: 282px;
  border-top: 1px solid #bbb;
  border-left: 1px solid #bbb;
  box-sizing: border-box;
}

.layer-list {
  flex: 1;
  overflow: hidden;
  background-color: white;
}

.row {
  display: flex;
  height: 24px;
  padding-right: 3px;
}

.row-main {
  flex: 1;
  display: flex;
  align-items: center;
  white-space: nowrap;
}

.row-main.lv0 { padding-left: 6px; }
.row-main.lv1 { padding-left: 24px; }
.row-main.lv2 { padding-left: 42px; }

.row-main.picked {
  background-color: #4a90d9;
}

.arrow {
  flex: none;
  width: 0;
  height: 0;
  margin-right: 11px;
  border-left: 6px solid #444;
  border-top: 5.5px solid transparent;
  border-bottom: 5.5px solid transparent;
}

.arrow.open {
  margin: 0 8.5px 0 -2.5px;
  border-left: 5.5px solid transparent;
  border-right: 5.5px solid transparent;
  border-top: 6px solid #444;
  border-bottom: 0;
}

.arrow.none {
  border: 0;
  width: 6px;
  height: 1px;
}

.li {
  flex: none;
  width: 16px;
  height: 16px;
  margin-right: 6px;
}

.tag {
  flex: none;
  width: 4px;
  height: 22px;
  margin-top: 1px;
  background-color: #f00;
}

.layer-scroll {
  flex: none;
  width: 12px;
  background-color: #cdcfce;
  padding: 243px 3px 0;
  box-sizing: border-box;
}

.layer-thumb {
  height: 540px;
  background-color: #85878a;
  border-radius: 3px 3px 0 0;
}

/* fill dock */
.tab-fill {
  width: 57px;
  margin-left: 7px;
  padding-left: 8px;
}

.tab-fill .tab-x {
  margin-left: 5px;
}

.ti-1 { margin-left: 16px; }
.ti-2 { margin-left: 24px; }
.ti-4 { margin-left: 26px; }

.big-t {
  margin-left: 25px;
  font-family: "Liberation Serif", serif;
  font-weight: bold;
  font-size: 23px;
  color: #111;
}

.fill-box {
  flex: none;
  box-sizing: border-box;
  display: flex;
  flex-direction: column;
  height: 763px;
  border: 1px solid #c8c8c8;
  border-bottom: 1px solid #bbb;
  overflow: hidden;
}

.subtabs {
  flex: none;
  display: flex;
  height: 25px;
  background-color: #dfe0dc;
  padding-left: 8px;
  gap: 15px;
  color: #444;
}

.subtab {
  display: flex;
  align-items: center;
  gap: 7px;
  height: 25px;
  box-sizing: border-box;
}

.subtab:nth-child(1) {
  width: 48px;
  padding-left: 7px;
  border-bottom: 3px solid #4a90d9;
  background-color: #f0f0ee;
}

.subtab:nth-child(3) {
  margin-left: 5px;
}

.sub-swatch {
  width: 12px;
  height: 12px;
  background-image: linear-gradient(90deg, #9ab8d8, #eef3f8);
}

.sub-empty {
  width: 10px;
  height: 10px;
  border: 1px solid #555;
}

.paint-row {
  flex: none;
  display: flex;
  align-items: center;
  height: 28px;
  margin-top: 2px;
  padding: 0 5px 0 9px;
  gap: 8px;
}

.paint-x {
  flex: none;
}

.paint {
  display: block;
  width: 14px;
  height: 14px;
  border: 1px solid #222;
}

.p-flat { background-color: #9ab8d8; }
.p-linear { background-image: linear-gradient(90deg, #9ab8d8, #eef3f8); }
.p-radial { background-image: radial-gradient(circle, #fff, #9ab8d8); }

.p-check {
  background-color: white;
  background-image:
    linear-gradient(#9ab8d8, #9ab8d8),
    linear-gradient(#9ab8d8, #9ab8d8);
  background-size: 7px 7px;
  background-position: 7px 0, 0 7px;
  background-repeat: no-repeat;
}

.p-dots {
  background-color: #d6e3f0;
  background-image: radial-gradient(circle, #fff 1.6px, transparent 2px);
  background-size: 5px 5px;
}

.p-swatch {
  background-color: #f4f4f4;
  border: 2px solid #333;
  width: 12px;
  height: 12px;
}

.paint-on {
  display: flex;
  padding: 3px;
  margin: 0 -3px;
  background-color: #dcdcda;
  border: 1px solid #c4c4c4;
  border-radius: 3px;
}

.paint-q {
  margin-left: 1px;
  font-size: 19px;
  font-weight: bold;
  color: #111;
}

.rule-ico {
  fill: #111;
  margin-right: -2px;
}

.rule-on {
  display: flex;
  align-items: center;
  justify-content: center;
  width: 22px;
  height: 22px;
  background-color: #dcdcda;
  border-radius: 3px;
  fill: #111;
}

.swatch-title {
  flex: none;
  margin: 1px 0 0 8px;
  height: 20px;
  line-height: 20px;
  font-weight: bold;
  font-size: 11.5px;
}

.swatch-table {
  flex: none;
  box-sizing: border-box;
  width: 293px;
  height: 309px;
  margin: 7px 0 0 5px;
  border: 1px solid #bbb;
  overflow: hidden;
  background-color: white;
}

.sw-head {
  position: relative;
  z-index: 1;
  display: flex;
  align-items: center;
  height: 18px;
  background-color: white;
  color: #999;
  border-bottom: 1px solid #eee;
}

.c-sw {
  flex: none;
  width: 67px;
  padding-left: 2px;
  box-sizing: border-box;
}

.sw-head .c-sw {
  padding-left: 6px;
  height: 18px;
  line-height: 18px;
  border-right: 1px solid #e4e4e4;
}

.c-name {
  flex: none;
  width: 180px;
  padding-left: 5px;
  box-sizing: border-box;
  position: relative;
}

.sw-head .c-name {
  border-right: 1px solid #e4e4e4;
  height: 18px;
  line-height: 18px;
}

.sort {
  position: absolute;
  right: 12px;
  top: 7px;
  border-left: 4px solid transparent;
  border-right: 4px solid transparent;
  border-bottom: 4px solid #999;
}

.c-num {
  padding-left: 5px;
}

.sw-row {
  display: flex;
  align-items: center;
  height: 23px;
}

.sw-row.first {
  margin-top: -6px;
}

.sw-row.picked {
  background-color: #4a90d9;
}

.chip {
  display: block;
  width: 64px;
  height: 21px;
  box-sizing: border-box;
  border: 1px solid rgba(255, 255, 255, 0.15);
}

.c-blue-dim { background-color: #2d3270; }
.c-button { background-color: #4a5fc0; }
.c-card { background-color: #222222; }
.c-disabled { background-color: #2d2d2d; }
.c-green-bg { background-color: #2f7d48; }
.c-green-icn { background-color: #47b35a; }
.c-green-dim { background-color: #2d5935; }
.c-orange-bg { background-color: #a67000; }
.c-orange-icn { background-color: #ffa131; }
.c-orange-dim { background-color: #7a5c30; }
.c-purple-bg { background-color: #6a1a80; }
.c-purple-icn { background-color: #a83fc0; }
.c-purple-dim { background-color: #45264f; }

.dash-mark {
  flex: none;
  width: 14px;
  height: 2px;
  margin: 15px 0 0 10px;
  background-color: #333;
}

.color-head {
  flex: none;
  display: flex;
  align-items: center;
  justify-content: space-between;
  margin: 13px 8px 0 7px;
  height: 27px;
  color: #555;
}

.combo {
  display: flex;
  align-items: center;
  box-sizing: border-box;
  border: 1px solid #c4c4c4;
  border-bottom-color: #aaa;
  border-radius: 4px;
  background-image: linear-gradient(#f6f6f4, #e4e4e2);
  color: #444;
}

.rgb-combo {
  width: 86px;
  height: 27px;
  padding: 0 7px 0 4px;
  gap: 7px;
}

.caret {
  margin-left: auto;
  border-left: 6px solid transparent;
  border-right: 6px solid transparent;
  border-top: 6px solid #2e3436;
}

.sliders {
  flex: none;
  display: flex;
  flex-direction: column;
  gap: 4px;
  margin-top: 3px;
}

.sl-row {
  display: flex;
  align-items: center;
  height: 26px;
}

.sl-row label {
  width: 26px;
  flex: none;
  padding-left: 10px;
  box-sizing: border-box;
  color: #555;
}

.slider {
  position: relative;
  flex: none;
  width: 188px;
  height: 26px;
  box-sizing: border-box;
  overflow: hidden;
}

.s-r { background-image: linear-gradient(90deg, rgb(0, 89, 53), rgb(255, 89, 53)); }
.s-g { background-image: linear-gradient(90deg, rgb(45, 0, 53), rgb(45, 255, 53)); }
.s-b { background-image: linear-gradient(90deg, rgb(45, 89, 0), rgb(45, 89, 255)); }

.s-a {
  background-color: #999;
  background-image:
    linear-gradient(90deg, rgba(45, 89, 53, 0), rgb(45, 89, 53)),
    linear-gradient(45deg, #5c5c5c 25%, transparent 25%, transparent 75%, #5c5c5c 75%),
    linear-gradient(45deg, #5c5c5c 25%, transparent 25%, transparent 75%, #5c5c5c 75%);
  background-size: 100% 100%, 16px 16px, 16px 16px;
  background-position: 0 0, 0 0, 8px 8px;
}

.mark {
  position: absolute;
  margin-left: -4px;
  border-left: 4px solid transparent;
  border-right: 4px solid transparent;
}

.mark.top {
  top: 0;
  border-top: 4px solid white;
}

.mark.bot {
  bottom: 0;
  border-bottom: 4px solid white;
}

.spin {
  flex: none;
  display: flex;
  align-items: center;
  width: 76px;
  height: 26px;
  margin-left: 4px;
  box-sizing: border-box;
  border: 1px solid #d0d0d0;
  border-radius: 3px;
  background-color: white;
  padding-left: 6px;
  overflow: hidden;
}

.spin span {
  flex: 1;
  min-width: 0;
  white-space: nowrap;
}

.spin svg {
  flex: none;
  margin-right: -1px;
}

.rgba-row {
  flex: none;
  display: flex;
  align-items: center;
  gap: 4px;
  height: 26px;
  margin-top: 163px;
  padding: 0 7px 0 8px;
}

.picker { margin-left: 5px; }

.rgba-lbl {
  color: #555;
}

.rgba-val {
  width: 57px;
  height: 26px;
  box-sizing: border-box;
  border: 1px solid #d0d0d0;
  border-radius: 3px;
  padding-left: 4px;
  line-height: 24px;
  letter-spacing: -0.45px;
  background-color: white;
}

.blend-row {
  flex: none;
  display: flex;
  align-items: center;
  justify-content: flex-end;
  height: 36px;
  padding-right: 4px;
  color: #555;
}

.blend-combo {
  width: 95px;
  height: 27px;
  padding: 0 8px 0 4px;
}
```
